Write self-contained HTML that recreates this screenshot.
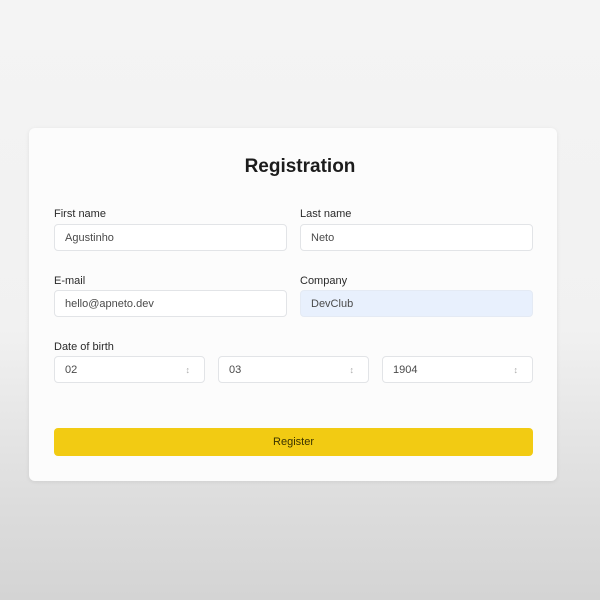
<!DOCTYPE html>
<html><head><style>
html,body{margin:0;padding:0}
body{width:600px;height:600px;background:linear-gradient(#f4f4f4 0%,#f1f1f1 55%,#dcdcdc 85%,#d4d4d4 100%);font-family:"Liberation Sans",sans-serif;position:relative;overflow:hidden}
.card{position:absolute;left:29px;top:128px;width:528px;height:353px;background:#fcfcfc;border-radius:6px;box-shadow:0 1px 4px rgba(0,0,0,.08)}
h1{position:absolute;left:0;right:0;top:156px;margin:0;text-align:center;font-size:19px;font-weight:bold;color:#1c1c1c}
.l{position:absolute;font-size:11px;color:#2a2a2a}
.i{position:absolute;height:27px;box-sizing:border-box;border:1px solid #e2e4e7;border-radius:4px;background:#fff;font-size:11px;color:#4a4a4a;padding-left:10px;line-height:26px}
.s::after{content:"\2195";position:absolute;right:14px;top:0;font-size:9px;color:#aaa}
.btn{position:absolute;left:54px;top:428px;width:479px;height:28px;background:#f2cb13;border-radius:4px;text-align:center;line-height:29px;font-size:11px;color:#3a3300}
</style></head><body>
<div class="card"></div>
<h1>Registration</h1>
<div class="l" style="left:54px;top:208px">First name</div>
<div class="l" style="left:300px;top:208px">Last name</div>
<div class="i" style="left:54px;top:224px;width:233px">Agustinho</div>
<div class="i" style="left:300px;top:224px;width:233px">Neto</div>
<div class="l" style="left:54px;top:275px">E-mail</div>
<div class="l" style="left:300px;top:275px">Company</div>
<div class="i" style="left:54px;top:290px;width:233px">hello@apneto.dev</div>
<div class="i" style="left:300px;top:290px;width:233px;background:#e8f0fd;border-color:#e4eaf4">DevClub</div>
<div class="l" style="left:54px;top:341px">Date of birth</div>
<div class="i s" style="left:54px;top:356px;width:151px">02</div>
<div class="i s" style="left:218px;top:356px;width:151px">03</div>
<div class="i s" style="left:382px;top:356px;width:151px">1904</div>
<div class="btn">Register</div>
</body></html>
